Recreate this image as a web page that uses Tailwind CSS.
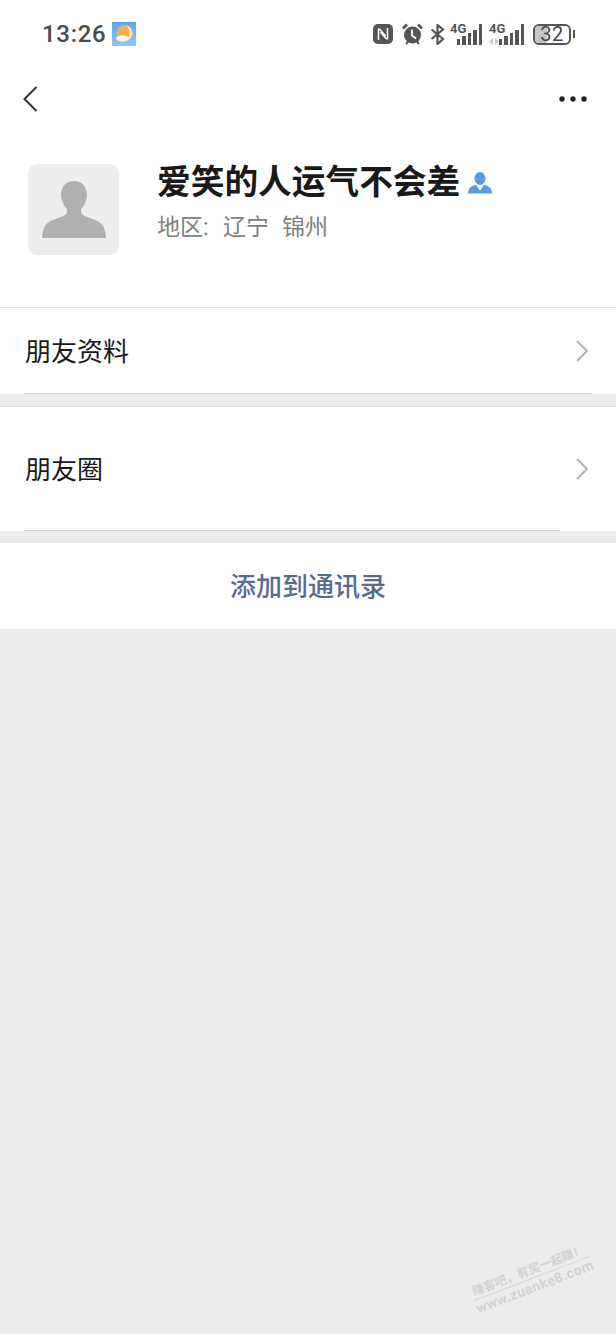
<!DOCTYPE html>
<html lang="zh-CN">
<head>
  <meta charset="UTF-8">
  <meta name="viewport" content="width=device-width, initial-scale=1.0">
  <title>详细资料</title>
  <script src="https://cdn.jsdelivr.net/npm/@tailwindcss/browser@4"></script>
</head>
<body class="bg-[#ececec] font-['Roboto','Noto_Sans_CJK_SC',sans-serif]">
  <div class="relative w-[616px] h-[1334px] overflow-hidden">
    <div class="bg-white">
      <!-- Status bar -->
      <div class="h-[68px] flex items-center pl-[42px] pr-[41px] text-[#4a4a4a]">
        <span class="text-[24px] font-medium tracking-[0.7px] leading-none">13:26</span>
        <svg class="ml-[6px]" width="24" height="24" viewBox="0 0 24 24">
          <defs><linearGradient id="sky" x1="0" y1="0" x2="0" y2="1"><stop offset="0" stop-color="#5aa5ec"/><stop offset="1" stop-color="#8fc9f8"/></linearGradient></defs>
          <rect width="24" height="24" fill="url(#sky)"/>
          <circle cx="12.500" cy="11" r="8" fill="#f2ae4c"/>
          <path d="M14 3.200a8 8 0 0 1 3.500 14l-3 .800a10 10 0 0 0-.500-14.800z" fill="#fbe8c8"/>
          <ellipse cx="10.500" cy="16.500" rx="6.500" ry="3.200" fill="#f3f6f8"/>
        </svg>
        <div class="ml-auto flex items-center">
          <!-- NFC -->
          <svg width="20" height="20" viewBox="0 0 20 20">
            <rect width="20" height="20" rx="5" fill="#555"/>
            <path d="M5.500 16V6q0-1.700 1.500-.500l5.500 6.500M14.500 4v10q0 1.700-1.500.500L7.500 8" fill="none" stroke="#fff" stroke-width="1.500"/>
          </svg>
          <!-- Alarm -->
          <svg class="ml-[9px]" width="21" height="22" viewBox="0 0 21 22">
            <path d="M1 5.500L5 1.500M20 5.500L16 1.500" stroke="#555" stroke-width="2.800" fill="none"/>
            <circle cx="10.500" cy="12" r="8.500" fill="#555"/>
            <path d="M4 21l2.500-3M17 21l-2.500-3" stroke="#555" stroke-width="2"/>
            <path d="M10 6.500V12.500l4 3" stroke="#fff" stroke-width="1.800" fill="none"/>
          </svg>
          <!-- Bluetooth -->
          <svg class="ml-[7px]" width="15" height="21" viewBox="0 0 15 21">
            <path d="M1.500 5.500l11.500 9.500-5.500 5V1l5.500 4.500L1.500 15" fill="none" stroke="#555" stroke-width="2.200"/>
          </svg>
          <!-- SIM 1 -->
          <div class="relative w-[32px] h-[22px] ml-[5px]">
            <span class="absolute left-0 -top-[1px] text-[13px] font-bold leading-[14px] text-[#555]">4G</span>
            <div class="absolute right-0 bottom-0 flex items-end gap-[2px]">
              <i class="block w-[3.500px] h-[6px] bg-[#555]"></i>
              <i class="block w-[3.500px] h-[9px] bg-[#555]"></i>
              <i class="block w-[3.500px] h-[12px] bg-[#555]"></i>
              <i class="block w-[3.500px] h-[15px] bg-[#555]"></i>
              <i class="block w-[3.500px] h-[21px] bg-[#555]"></i>
            </div>
          </div>
          <!-- SIM 2 -->
          <div class="relative w-[35px] h-[22px] ml-[7px]">
            <span class="absolute left-0 -top-[1px] text-[13px] font-bold leading-[14px] text-[#555]">4G</span>
            <svg class="absolute left-0 bottom-0" width="10" height="7" viewBox="0 0 10 7" fill="#c8c8c8"><path d="M0 3.500L4 0v7zM6 0l4 3.500L6 7z"/></svg>
            <div class="absolute right-0 bottom-0 flex items-end gap-[2px]">
              <i class="block w-[3.500px] h-[6px] bg-[#555]"></i>
              <i class="block w-[3.500px] h-[9px] bg-[#555]"></i>
              <i class="block w-[3.500px] h-[12px] bg-[#555]"></i>
              <i class="block w-[3.500px] h-[15px] bg-[#555]"></i>
              <i class="block w-[3.500px] h-[21px] bg-[#555]"></i>
            </div>
          </div>
          <!-- Battery -->
          <div class="flex items-center ml-[9px]">
            <div class="relative w-[38px] h-[21px] rounded-[6px] border-2 border-[#555] overflow-hidden flex items-center justify-center">
              <span class="absolute left-0 top-0 bottom-0 w-[12px] bg-[#c4c4c4]"></span>
              <span class="relative text-[20px] leading-none tracking-[0.5px] text-[#444]">32</span>
            </div>
            <span class="ml-[2px] w-[2px] h-[8px] bg-[#555]"></span>
          </div>
        </div>
      </div>

      <!-- Nav bar -->
      <div class="h-[62px] flex items-center justify-between pl-[23px] pr-[29px]">
        <svg width="15" height="26" viewBox="0 0 15 26">
          <path d="M13.500 1L1.500 13l12 12" fill="none" stroke="#333" stroke-width="2"/>
        </svg>
        <svg width="28" height="6" viewBox="0 0 28 6" class="fill-[#222]">
          <circle cx="3" cy="3" r="2.700"/><circle cx="14" cy="3" r="2.700"/><circle cx="25" cy="3" r="2.700"/>
        </svg>
      </div>

      <!-- Profile -->
      <div class="h-[177px] flex items-start pl-[28px] pt-[34px]">
        <div class="w-[91px] h-[91px] rounded-[9px] bg-[#eeeeee] flex items-center justify-center">
          <svg width="64" height="57" viewBox="0 0 64 57">
            <path d="M32 0c8 0 13 6 13 14 0 6-3 11-6 14v3c0 3 6 5 12 7 8 3 12 6 13 19H0c1-13 5-16 13-19 6-2 12-4 12-7v-3c-3-3-6-8-6-14C19 6 24 0 32 0z" fill="#b0b0b0"/>
          </svg>
        </div>
        <div class="ml-[38px] -mt-[3px]">
          <div class="flex items-center">
            <span class="text-[33.700px] leading-[44px] font-bold text-[#191919] whitespace-nowrap">爱笑的人运气不会差</span>
            <svg class="ml-[8px]" width="24" height="22" viewBox="0 0 24 22" fill="#5b9be2">
              <ellipse cx="12" cy="6.500" rx="5.500" ry="6.500"/>
              <path d="M8 12.500L12 19l4-6.500c4 1.500 8 3 8 9H0c0-6 4-7.500 8-9z"/>
            </svg>
          </div>
          <div class="mt-[7px] flex text-[23px] leading-[32px] text-[#808080] whitespace-nowrap">
            <span class="w-[66px]">地区:</span><span>辽宁</span><span class="ml-[13px]">锦州</span>
          </div>
        </div>
      </div>
    </div>

    <!-- Rows -->
    <div class="bg-white pl-[24px] border-t border-[#e3e3e3]">
      <div class="h-[86px] mr-[24px] pr-[4px] border-b border-[#d6d6d6] flex items-center justify-between">
        <span class="text-[26px] text-[#191919] pl-px pt-[4px]">朋友资料</span>
        <svg width="12" height="22" viewBox="0 0 12 22"><path d="M1 1l10 10L1 21" fill="none" stroke="#b2b2b2" stroke-width="2"/></svg>
      </div>
    </div>
    <div class="h-[12px]"></div>
    <div class="bg-white border-t border-[#dedede] flex items-center pl-[24px] pr-[28px]">
      <div class="h-[124px] flex-1 border-b border-[#d2d2d2] flex items-center">
        <span class="text-[26px] text-[#191919] pl-px pt-[4px]">朋友圈</span>
      </div>
      <svg class="ml-[16px]" width="12" height="22" viewBox="0 0 12 22"><path d="M1 1l10 10L1 21" fill="none" stroke="#b2b2b2" stroke-width="2"/></svg>
    </div>
    <div class="h-[12px]"></div>
    <div class="h-[86px] bg-white flex items-center justify-center">
      <span class="text-[26px] font-medium text-[#576b95] pt-[2px]">添加到通讯录</span>
    </div>

    <!-- Watermark -->
    <div class="absolute left-[470px] top-[1263px] w-[124px] -rotate-[21deg] text-center text-[#d2d2d2] whitespace-nowrap">
      <div class="text-[12px] leading-[15px] font-bold border-b border-[#d6d6d6]">赚客吧，有奖一起赚！</div>
      <div class="text-[14px] leading-[17px] font-bold tracking-[0.4px]">www.zuanke8.com</div>
    </div>
  </div>
</body>
</html>
